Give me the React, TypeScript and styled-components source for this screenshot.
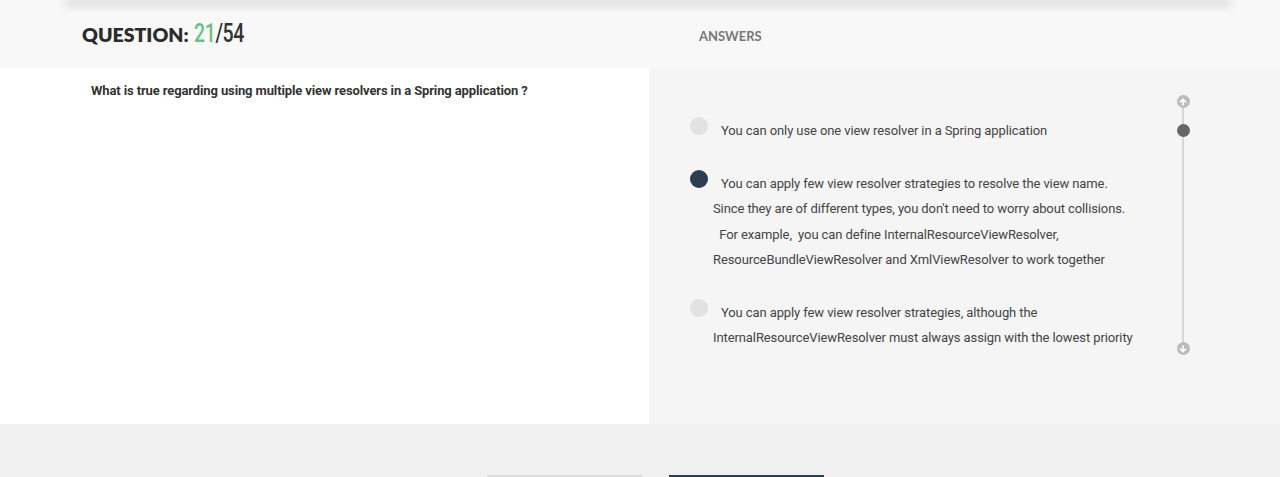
import React from "react";
import styled, { createGlobalStyle } from "styled-components";

const Global = createGlobalStyle`
  html, body { margin: 0; padding: 0; background: #f8f8f8; }
  body { font-family: Roboto, "Liberation Sans", sans-serif; overflow: hidden; }
`;

const Page = styled.div`
  width: 1280px;
  height: 477px;
  background: #f0f0f0;
  display: flex;
  flex-direction: column;
  overflow: hidden;
`;

const TopCard = styled.div`
  position: relative;
  z-index: 2;
  height: 1px;
  margin: -1px 50px 0 66px;
  background: #fff;
  box-shadow: 0 3px 10px 1px rgba(0, 0, 0, 0.3);
`;

const Header = styled.div`
  display: grid;
  grid-template-columns: 649px 1fr;
  height: 68px;
  background: #f8f8f8;
  align-items: center;
`;

const QuestionTitle = styled.h1`
  margin: 0;
  padding-left: 82px;
  font-family: Lato, "Open Sans", sans-serif;
  font-weight: 800;
  font-size: 19.5px;
  color: #2b2b2b;
  letter-spacing: 0;
  display: flex;
  align-items: baseline;
  gap: 5px;
  margin-top: -1px;
`;

const Counter = styled.span`
  display: inline-block;
  font-family: Roboto, sans-serif;
  font-weight: 500;
  font-size: 25px;
  letter-spacing: -0.5px;
  color: #333;
  transform: scaleX(0.78);
  transform-origin: left center;
`;

const Current = styled.span`
  color: #6cbf86;
`;

const AnswersLabel = styled.h2`
  margin: 0;
  padding-left: 50px;
  font-family: Lato, "Open Sans", sans-serif;
  font-weight: 700;
  font-size: 13px;
  color: #777;
  margin-top: 4px;
`;

const Body = styled.div`
  display: grid;
  grid-template-columns: 649px 1fr;
  height: 356px;
`;

const QuestionPanel = styled.div`
  background: #fff;
  padding: 15px 91px;
`;

const QuestionText = styled.p`
  margin: 0;
  font-family: Roboto, sans-serif;
  font-weight: 700;
  font-size: 13px;
  line-height: 16px;
  color: #333;
  letter-spacing: -0.12px;
`;

const AnswerPanel = styled.div`
  background: #f5f5f5;
  display: flex;
  padding: 0 91px 0 41px;
`;

const AnswerList = styled.div`
  flex: 1;
  padding-top: 50px;
  display: flex;
  flex-direction: column;
  gap: 27px;
`;

const Answer = styled.label`
  display: flex;
  align-items: flex-start;
  gap: 5px;
  cursor: pointer;
`;

const Radio = styled.span<{ $selected?: boolean }>`
  flex: none;
  width: 18px;
  height: 18px;
  border-radius: 50%;
  margin-top: -1px;
  background: ${(p) => (p.$selected ? "#2c3e50" : "#e2e2e2")};
`;

const AnswerText = styled.span`
  font-family: Roboto, sans-serif;
  font-size: 13px;
  line-height: 25.5px;
  color: #444;
  text-indent: 8px;
  letter-spacing: -0.1px;
`;

const Rail = styled.div`
  position: relative;
  width: 12px;
  margin-top: 27px;
  height: 260px;
  display: flex;
  flex-direction: column;
  align-items: center;
  justify-content: space-between;
`;

const RailLine = styled.div`
  position: absolute;
  top: 6px;
  bottom: 6px;
  left: 5px;
  width: 2px;
  background: #d6d6d6;
`;

const ArrowButton = styled.span`
  position: relative;
  z-index: 1;
  width: 13px;
  height: 13px;
  border-radius: 50%;
  background: #bbbbbb;
  display: flex;
  align-items: center;
  justify-content: center;
`;

const Thumb = styled.span`
  position: absolute;
  left: -0.5px;
  top: 29px;
  width: 13px;
  height: 13px;
  border-radius: 50%;
  background: #666;
`;

const Footer = styled.div`
  flex: 1;
  display: flex;
  justify-content: center;
  align-items: flex-end;
  gap: 27px;
  padding-left: 31px;
  background: #f0f0f0;
`;

const FooterButton = styled.button<{ $primary?: boolean }>`
  width: 155px;
  height: 2px;
  border: none;
  padding: 0;
  background: ${(p) => (p.$primary ? "#2c3e50" : "#dcdcdc")};
`;

const Arrow = ({ down }: { down?: boolean }) => (
  <svg width="8" height="8" viewBox="0 0 8 8" style={{ transform: down ? "rotate(180deg)" : undefined }}>
    <path d="M4 1.2 L1.3 4 M4 1.2 L6.7 4 M4 1.2 V7" stroke="#fff" strokeWidth="1.6" fill="none" strokeLinecap="round" />
  </svg>
);

export default function App() {
  return (
    <Page>
      <Global />
      <TopCard />
      <Header>
        <QuestionTitle>
          QUESTION:
          <Counter>
            <Current>21</Current>/54
          </Counter>
        </QuestionTitle>
        <AnswersLabel>ANSWERS</AnswersLabel>
      </Header>
      <Body>
        <QuestionPanel>
          <QuestionText>What is true regarding using multiple view resolvers in a Spring application ?</QuestionText>
        </QuestionPanel>
        <AnswerPanel>
          <AnswerList>
            <Answer>
              <Radio />
              <AnswerText>You can only use one view resolver in a Spring application</AnswerText>
            </Answer>
            <Answer>
              <Radio $selected />
              <AnswerText>
                You can apply few view resolver strategies to resolve the view name.
                <br />
                Since they are of different types, you don't need to worry about collisions.
                <br />
                &nbsp;&nbsp;For example,&nbsp; you can define InternalResourceViewResolver,
                <br />
                ResourceBundleViewResolver and XmlViewResolver to work together
              </AnswerText>
            </Answer>
            <Answer>
              <Radio />
              <AnswerText>
                You can apply few view resolver strategies, although the
                <br />
                InternalResourceViewResolver must always assign with the lowest priority
              </AnswerText>
            </Answer>
          </AnswerList>
          <Rail>
            <RailLine />
            <ArrowButton>
              <Arrow />
            </ArrowButton>
            <Thumb />
            <ArrowButton>
              <Arrow down />
            </ArrowButton>
          </Rail>
        </AnswerPanel>
      </Body>
      <Footer>
        <FooterButton />
        <FooterButton $primary />
      </Footer>
    </Page>
  );
}
